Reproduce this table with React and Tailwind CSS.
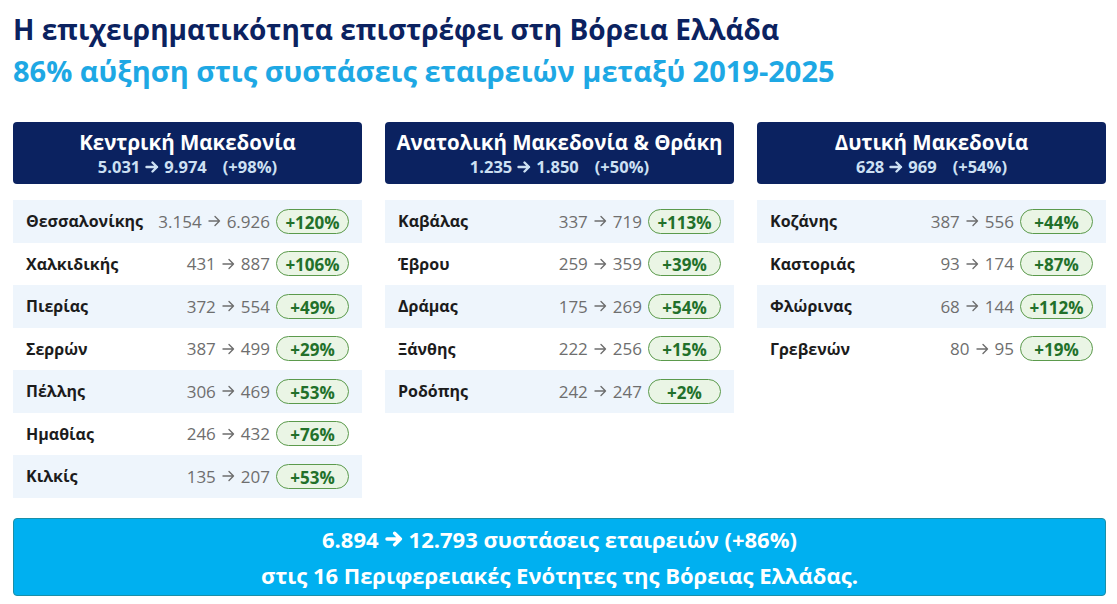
import React from 'react';

const regions = [
  {
    title: 'Κεντρική Μακεδονία',
    from: '5.031',
    to: '9.974',
    pct: '+98%',
    rows: [
      ['Θεσσαλονίκης', '3.154', '6.926', '+120%'],
      ['Χαλκιδικής', '431', '887', '+106%'],
      ['Πιερίας', '372', '554', '+49%'],
      ['Σερρών', '387', '499', '+29%'],
      ['Πέλλης', '306', '469', '+53%'],
      ['Ημαθίας', '246', '432', '+76%'],
      ['Κιλκίς', '135', '207', '+53%'],
    ],
  },
  {
    title: 'Ανατολική Μακεδονία & Θράκη',
    from: '1.235',
    to: '1.850',
    pct: '+50%',
    rows: [
      ['Καβάλας', '337', '719', '+113%'],
      ['Έβρου', '259', '359', '+39%'],
      ['Δράμας', '175', '269', '+54%'],
      ['Ξάνθης', '222', '256', '+15%'],
      ['Ροδόπης', '242', '247', '+2%'],
    ],
  },
  {
    title: 'Δυτική Μακεδονία',
    from: '628',
    to: '969',
    pct: '+54%',
    rows: [
      ['Κοζάνης', '387', '556', '+44%'],
      ['Καστοριάς', '93', '174', '+87%'],
      ['Φλώρινας', '68', '144', '+112%'],
      ['Γρεβενών', '80', '95', '+19%'],
    ],
  },
];

// arrow glyph drawn so it looks the same in every font
const Arrow = ({ className, strokeWidth = 1.6 }) => (
  <svg className={className} viewBox="0 0 14 12" fill="none" stroke="currentColor" strokeWidth={strokeWidth} strokeLinecap="round" strokeLinejoin="round">
    <path d="M1.5 6h10.5M7.5 1.5L12 6l-4.5 4.5" />
  </svg>
);

const RegionColumn = ({ region }) => (
  <div className="flex flex-col">
    <div className="h-[62px] rounded-[4px] bg-[#0b2260] flex flex-col items-center justify-center text-center pb-[1px]">
      <div className="text-white text-[20.5px] font-bold leading-[28px]">{region.title}</div>
      <div className="text-[#cde0f3] text-[16.5px] font-bold leading-[22px] flex items-center">
        <span>{region.from}</span>
        <Arrow className="w-[14px] h-[12px] mx-[5px]" strokeWidth={2.4} />
        <span>{region.to}</span>
        <span className="ml-[16px]">({region.pct})</span>
      </div>
    </div>
    <div className="mt-[16px] flex flex-col">
      {region.rows.map((row, i) => (
        <div
          key={row[0]}
          className={`h-[42.5px] flex items-center pl-[13px] pr-[13px] ${i % 2 === 0 ? 'bg-[#eef5fc]' : 'bg-white'}`}
        >
          <span className="text-[#1c1c1c] text-[16px] font-bold">{row[0]}</span>
          <span className="ml-auto text-[#6e6e6e] text-[17px] mr-[6px] flex items-center">
            <span>{row[1]}</span>
            <Arrow className="w-[15px] h-[12px] mx-[5px]" strokeWidth={1.4} />
            <span>{row[2]}</span>
          </span>
          <span className="w-[73px] h-[25px] rounded-full border border-[#5b9a4c] bg-[#eaf5e5] text-[#22702a] text-[17px] font-bold flex items-center justify-center leading-none pt-[2px]">
            {row[3]}
          </span>
        </div>
      ))}
    </div>
  </div>
);

export default function App() {
  return (
    <div className="w-[1117px] h-[604px] bg-white overflow-hidden font-['Open_Sans',sans-serif] px-[13px] pt-[8px]">
      <h1 className="text-[#0b2260] text-[28px] font-bold leading-[42px]">
        Η επιχειρηματικότητα επιστρέφει στη Βόρεια Ελλάδα
      </h1>
      <h2 className="text-[#1ea8e4] text-[29px] font-bold leading-[42px]">
        86% αύξηση στις συστάσεις εταιρειών μεταξύ 2019-2025
      </h2>
      <div className="mt-[30px] grid grid-cols-3 gap-x-[23px] w-[1093px]">
        {regions.map((r) => (
          <RegionColumn key={r.title} region={r} />
        ))}
      </div>
      <div className="mt-[20px] w-[1093px] h-[78px] rounded-[4px] bg-[#00b0f0] border border-[#1a8fa8] flex flex-col items-center justify-center text-white text-[22px] font-bold leading-[36px]">
        <div className="flex items-center">
          <span>6.894</span>
          <Arrow className="w-[18px] h-[16px] mx-[6px]" strokeWidth={2.6} />
          <span>12.793 συστάσεις εταιρειών (+86%)</span>
        </div>
        <div>στις 16 Περιφερειακές Ενότητες της Βόρειας Ελλάδας.</div>
      </div>
    </div>
  );
}
